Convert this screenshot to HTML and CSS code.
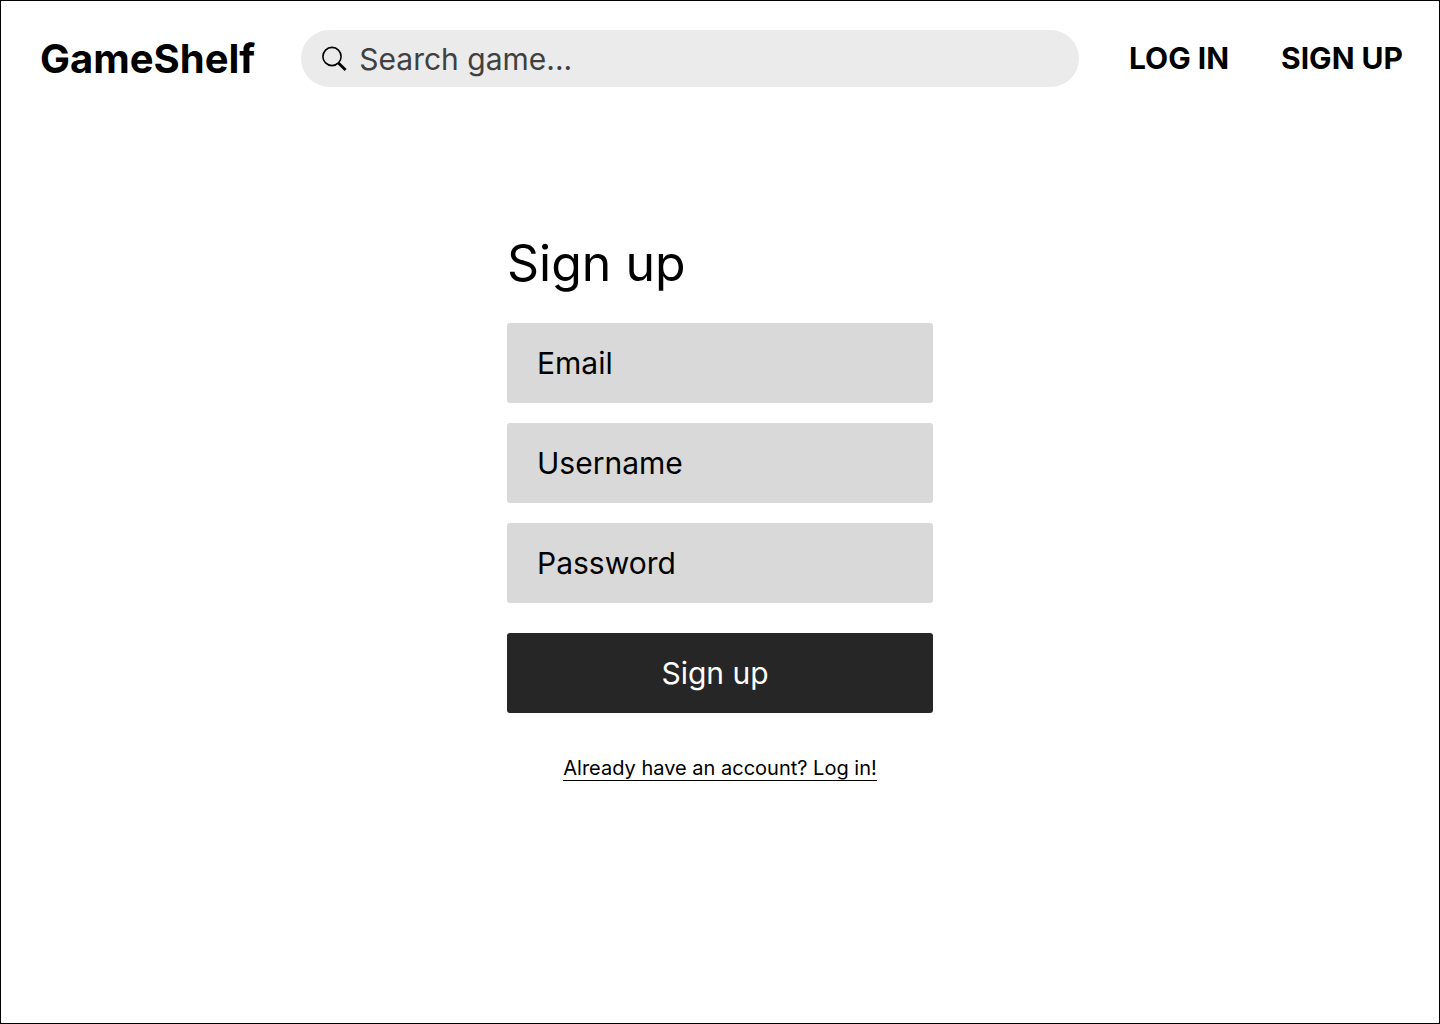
FILE: index.html
```html
<!DOCTYPE html>
<html lang="en">
<head>
<meta charset="utf-8">
<title>GameShelf – Sign up</title>
<meta name="viewport" content="width=device-width, initial-scale=1">
<link rel="stylesheet" href="styles.css">
</head>
<body>
<header class="header">
  <a class="logo" href="#">GameShelf</a>
  <form class="search" role="search">
    <svg class="search-icon" viewBox="0 0 25 25" fill="none" stroke="currentColor" aria-hidden="true"><circle cx="10" cy="10.5" r="9.1" stroke-width="1.6"/><path d="M16.4 16.9L23.6 24.1" stroke-width="2.8"/></svg>
    <input class="search-input" type="search" placeholder="Search game..." aria-label="Search game">
  </form>
  <nav class="nav">
    <a class="nav-link" href="#">LOG IN</a>
    <a class="nav-link" href="#">SIGN UP</a>
  </nav>
</header>
<main class="main">
  <form class="signup">
    <h1 class="title">Sign up</h1>
    <div class="fields">
      <input class="field" type="email" placeholder="Email" aria-label="Email">
      <input class="field" type="text" placeholder="Username" aria-label="Username">
      <input class="field" type="password" placeholder="Password" aria-label="Password">
    </div>
    <button class="submit" type="submit">Sign up</button>
    <a class="login-link" href="#">Already have an account? Log in!</a>
  </form>
</main>
</body>
</html>
```
FILE: styles.css
```css
* {
  box-sizing: border-box;
}

body {
  margin: 0;
  min-height: 100vh;
  border: 1px solid #000;
  background: #fff;
  color: #000;
  font-family: Inter, sans-serif;
}

a {
  color: inherit;
  text-decoration: none;
}

.header {
  display: flex;
  align-items: center;
  padding: 29px 36px 0 39px;
}

.logo {
  font-size: 40px;
  line-height: 48px;
  font-weight: 700;
}

.search {
  display: flex;
  flex: 1;
  align-items: center;
  gap: 12px;
  height: 57px;
  margin: 0 50px 0 46px;
  padding: 0 21px;
  border-radius: 29px;
  background: #ebebeb;
}

.search-icon {
  flex: none;
  width: 25px;
  height: 25px;
  overflow: visible;
}

.search-input {
  flex: 1;
  min-width: 0;
  padding: 0;
  border: 0;
  outline: 0;
  background: none;
  font: 400 30px/36px Inter, sans-serif;
}

.search-input::placeholder {
  color: #404040;
  opacity: 1;
}

.nav {
  display: flex;
  gap: 52px;
  padding-bottom: 2px;
  font-size: 30px;
  line-height: 36px;
  font-weight: 700;
}

.main {
  display: flex;
  justify-content: center;
  padding: 146px 20px 40px;
}

.signup {
  display: flex;
  flex-direction: column;
  width: 100%;
  max-width: 426px;
}

.title {
  margin: 0 0 30px;
  font-size: 50px;
  line-height: 60px;
  font-weight: 400;
}

.fields {
  display: flex;
  flex-direction: column;
  gap: 20px;
}

.field {
  width: 100%;
  height: 80px;
  padding: 0 30px;
  border: 0;
  border-radius: 3px;
  background: #d9d9d9;
  font: 400 30px/36px Inter, sans-serif;
}

.field::placeholder {
  color: #000;
  opacity: 1;
}

.submit {
  height: 80px;
  margin: 30px 0 43px;
  padding: 0 10px 0 0;
  border: 0;
  border-radius: 3px;
  background: #262626;
  color: #fff;
  font: 400 30px/36px Inter, sans-serif;
}

.login-link {
  align-self: center;
  border-bottom: 1px solid #000;
  font-size: 20px;
  line-height: 24px;
}
```
